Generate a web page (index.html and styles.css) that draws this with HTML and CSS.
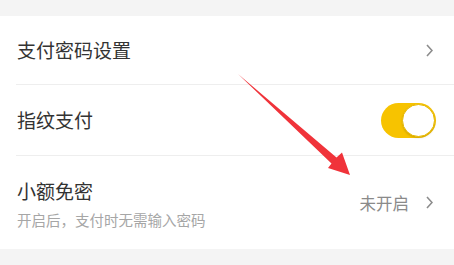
FILE: index.html
```html
<!DOCTYPE html>
<html lang="zh">
<head>
<meta charset="utf-8">
<link rel="stylesheet" href="styles.css">
</head>
<body>
<div class="page">
  <div class="list">
    <div class="row row-short">
      <span class="title">支付密码设置</span>
      <svg class="chev" viewBox="0 0 7 13" width="7" height="13"><polyline points="1,1 6,6.5 1,12" /></svg>
    </div>
    <div class="sep"></div>
    <div class="row row-mid">
      <span class="title">指纹支付</span>
      <div class="toggle"><div class="knob"></div></div>
    </div>
    <div class="sep"></div>
    <div class="row row-tall">
      <div class="stack">
        <span class="title">小额免密</span>
        <span class="sub">开启后，支付时无需输入密码</span>
      </div>
      <div class="right">
        <span class="status">未开启</span>
        <svg class="chev" viewBox="0 0 7 13" width="7" height="13"><polyline points="1,1 6,6.5 1,12" /></svg>
      </div>
    </div>
  </div>
  <svg class="arrow" width="454" height="265" viewBox="0 0 454 265">
    <polygon points="238,74 336.5,157.5 342,152.5 350,175 328,168 331.5,163.5" />
  </svg>
</div>
</body>
</html>
```
FILE: styles.css
```css
html, body {
  margin: 0;
  padding: 0;
  background: #f4f4f4;
  font-family: "Noto Sans CJK SC", "Noto Sans", sans-serif;
}
.page {
  position: relative;
  width: 454px;
  height: 265px;
  padding-top: 16px;
  box-sizing: border-box;
}
.list {
  background: #ffffff;
}
.row {
  display: flex;
  align-items: center;
  justify-content: space-between;
  padding: 0 18px 0 17px;
}
.row-short { height: 68px; }
.row-mid { height: 70px; }
.row-tall { height: 93px; }
.sep {
  height: 1px;
  margin-left: 16px;
  background: #eeeeee;
}
.title {
  font-size: 19px;
  color: #333333;
  line-height: 26px;
}
.stack {
  display: flex;
  flex-direction: column;
  margin-top: 2px;
}
.sub {
  font-size: 14.5px;
  color: #a6a6a6;
  line-height: 20px;
  margin-top: 6px;
}
.right {
  display: flex;
  align-items: center;
  gap: 17px;
}
.status {
  font-size: 16.5px;
  color: #8a8a8a;
  line-height: 22px;
}
.chev {
  margin-right: 3px;
}
.chev polyline {
  fill: none;
  stroke: #8c8c8c;
  stroke-width: 1.6;
}
.toggle {
  width: 55px;
  height: 35px;
  border-radius: 18px;
  background: #f7c300;
  display: flex;
  align-items: center;
  justify-content: flex-end;
  box-sizing: border-box;
  padding-right: 1px;
}
.knob {
  width: 31px;
  height: 31px;
  border-radius: 50%;
  background: #ffffff;
  border: 1px solid #e8b800;
  box-shadow: 0 1px 2px rgba(0,0,0,0.15);
}
.arrow {
  position: absolute;
  left: 0;
  top: 0;
  pointer-events: none;
}
.arrow polygon {
  fill: #f0333a;
}
```
